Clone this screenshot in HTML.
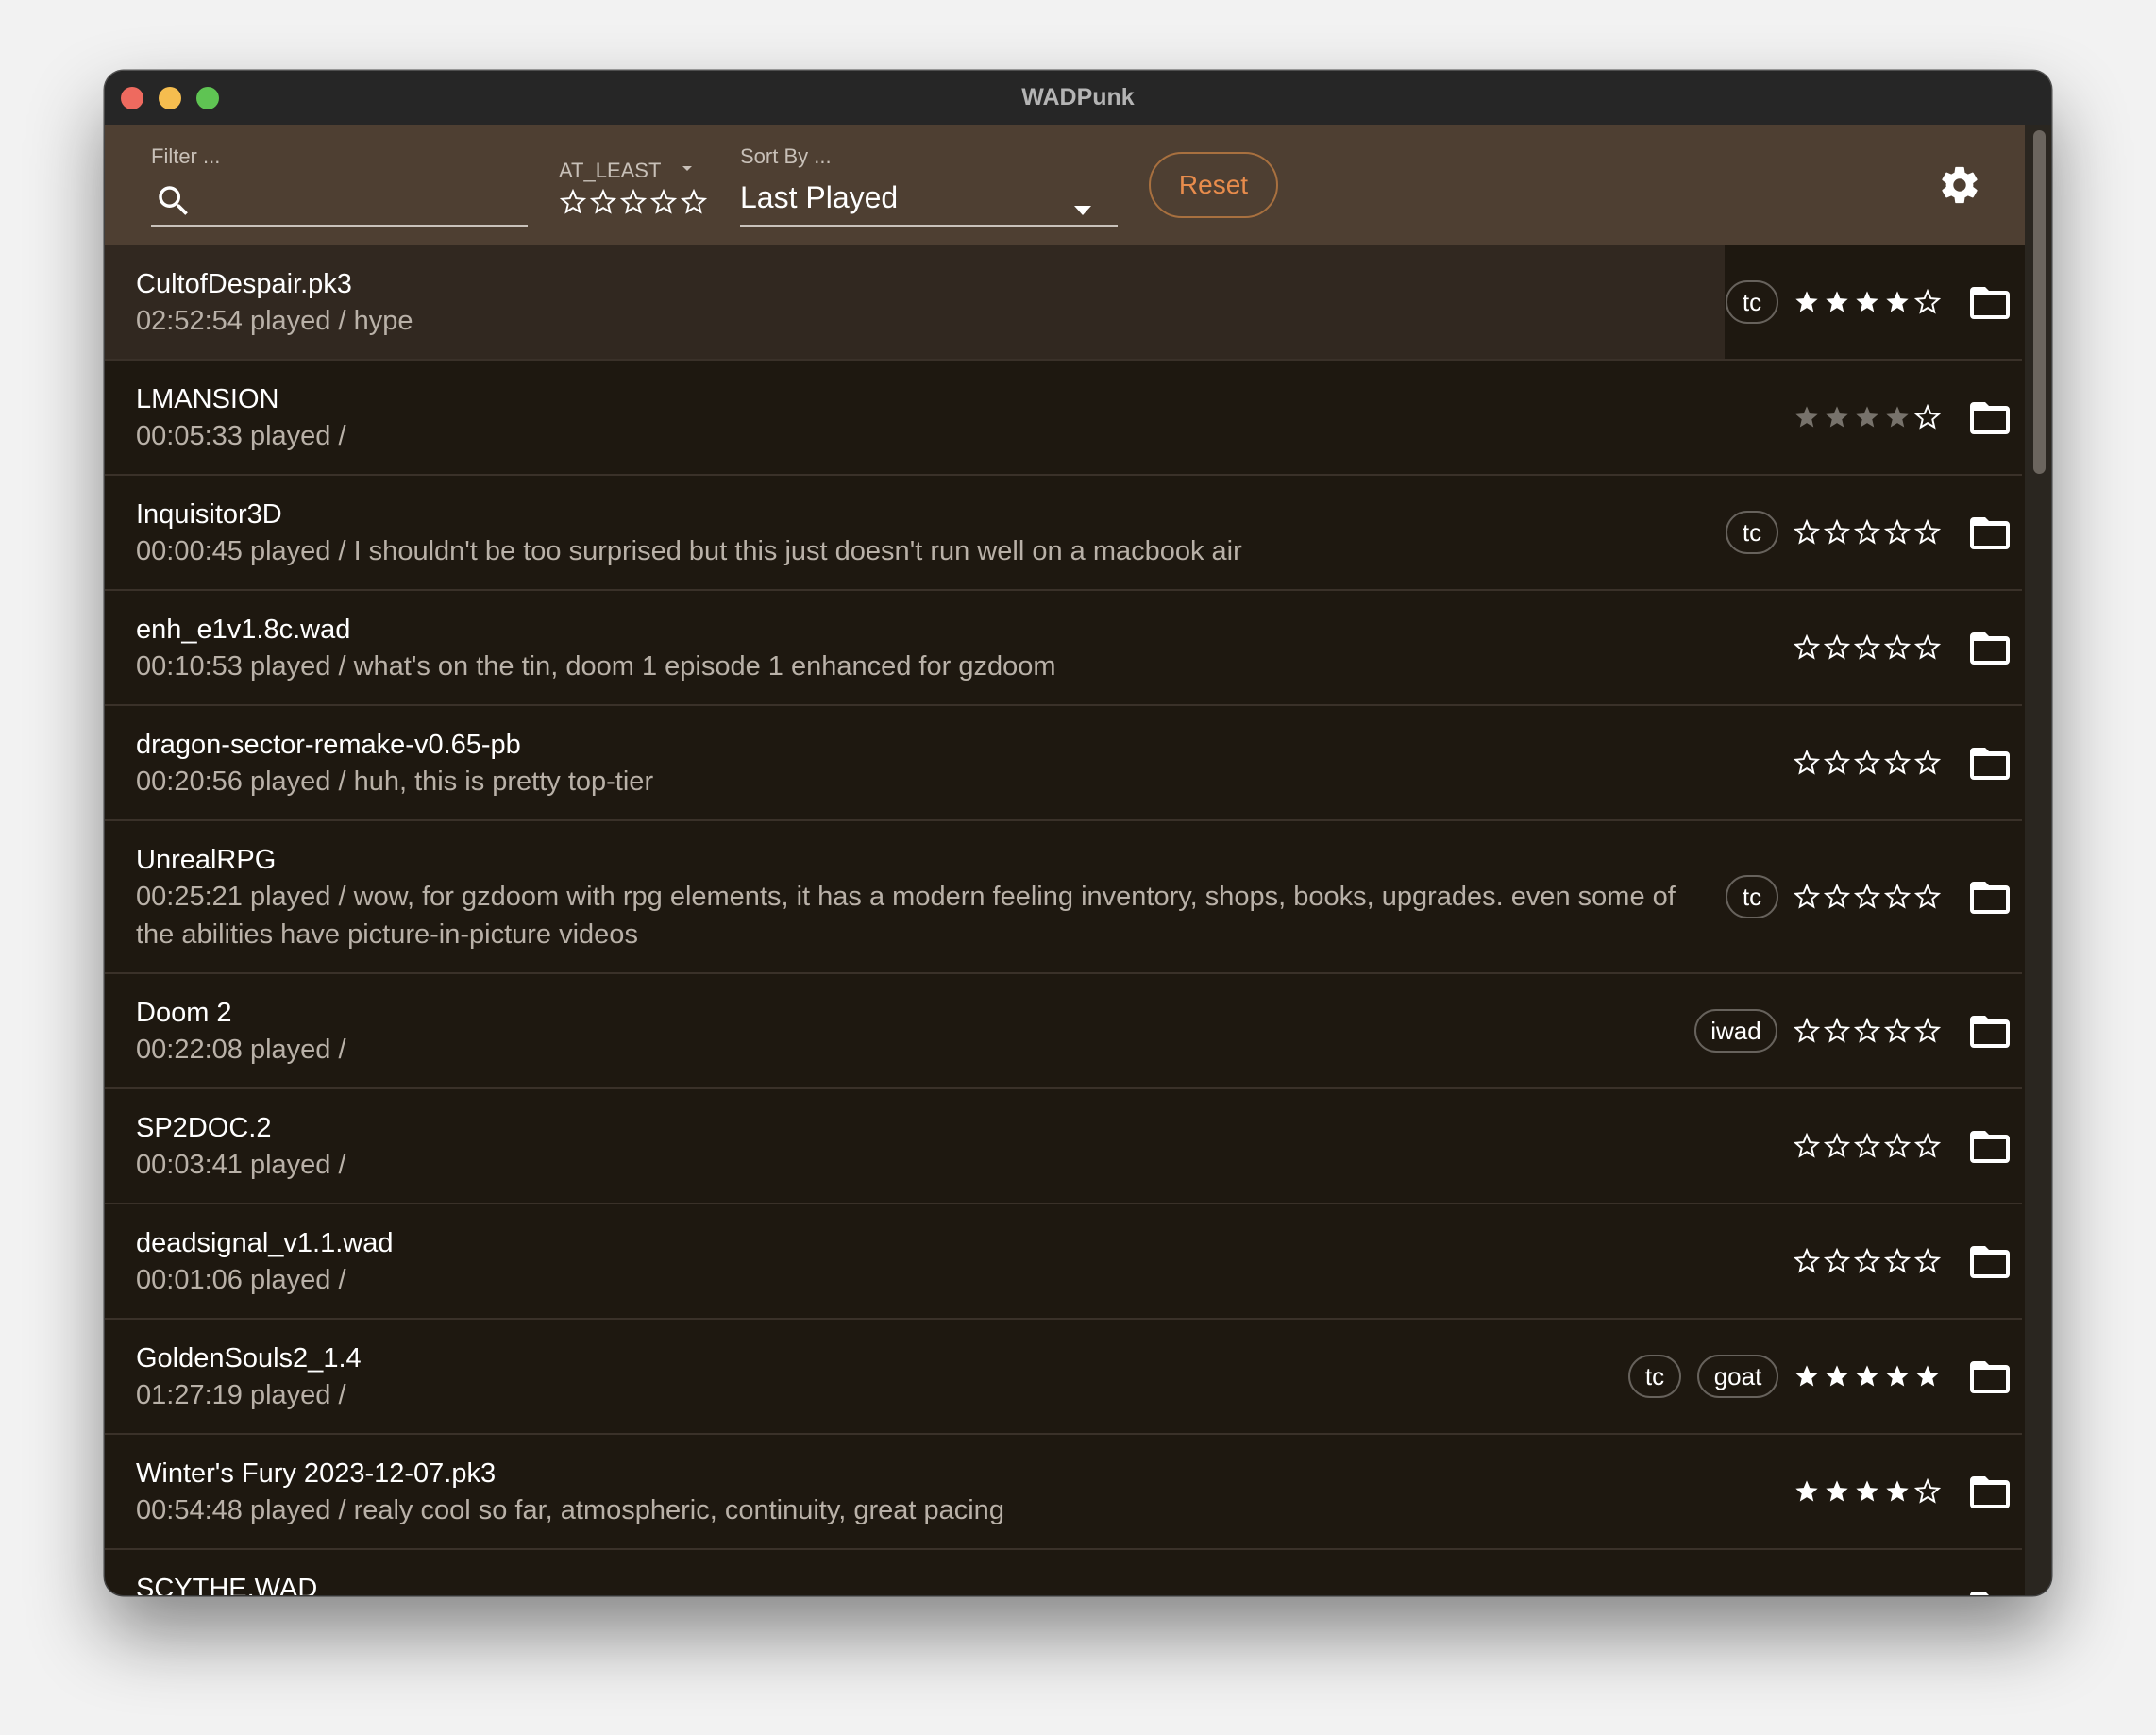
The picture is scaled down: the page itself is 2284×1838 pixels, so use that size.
<!DOCTYPE html>
<html><head><meta charset="utf-8"><style>
*{margin:0;padding:0;box-sizing:border-box}
html,body{width:2284px;height:1838px;overflow:hidden;background:#f2f2f2;font-family:"Liberation Sans",sans-serif}
.win{position:absolute;left:111px;top:75px;width:2062px;height:1615px;border-radius:20px;overflow:hidden;background:#1e1810;box-shadow:0 40px 80px rgba(0,0,0,.45),0 0 0 1.5px #555;}
.tb{position:absolute;left:0;top:0;width:100%;height:57px;background:#262626}
.dot{position:absolute;top:17px;width:24px;height:24px;border-radius:50%}
.title{position:absolute;left:0;width:100%;top:14px;text-align:center;color:#b4b4b4;font-weight:bold;font-size:25px}
.tool{position:absolute;left:0;top:57px;width:2034px;height:128px;background:#4e3f32}
.lbl{position:absolute;color:#c8c0b8;font-size:22px}
.uline{position:absolute;height:3px;background:#c9c2bb}
.list{position:absolute;left:0;top:185px;width:2031px;height:1430px;overflow:hidden}
.row{position:absolute;left:0;width:2031px;border-bottom:2px solid #3a3129}
.t1{position:absolute;left:33px;color:#fff;font-size:29px;line-height:32px;white-space:nowrap}
.t2{position:absolute;left:33px;color:#b9b1a8;font-size:29px;line-height:40px;width:1640px}
.chip{position:absolute;height:46px;border:2px solid #67625c;border-radius:23px;color:#fff;font-size:26px;line-height:42px;text-align:center}
.stars{position:absolute;left:1789px;width:160px;height:28px}
.fold{position:absolute;left:1976px;width:42px;height:34px}
.sb{position:absolute;left:2034px;top:57px;width:28px;height:1558px;background:#2a2620}
.thumb{position:absolute;left:9px;top:6px;width:13px;height:364px;border-radius:7px;background:#6b655e}
</style></head><body>
<svg width="0" height="0" style="position:absolute">
<defs>
<symbol id="sf" viewBox="0 0 24 24"><path fill="#fff" d="M12 17.27L18.18 21l-1.64-7.03L22 9.24l-7.19-.61L12 2 9.19 8.63 2 9.24l5.46 4.73L5.82 21z"/></symbol>
<symbol id="sg" viewBox="0 0 24 24"><path fill="#77726b" d="M12 17.27L18.18 21l-1.64-7.03L22 9.24l-7.19-.61L12 2 9.19 8.63 2 9.24l5.46 4.73L5.82 21z"/></symbol>
<symbol id="so" viewBox="0 0 24 24"><path fill="none" stroke="#fff" stroke-width="1.7" stroke-linejoin="miter" d="M12 17.27L18.18 21l-1.64-7.03L22 9.24l-7.19-.61L12 2 9.19 8.63 2 9.24l5.46 4.73L5.82 21z"/></symbol>
<symbol id="fd" viewBox="0 0 42 34"><path fill="#fff" d="M4 0h12l4 4h18a4 4 0 0 1 4 4v22a4 4 0 0 1-4 4H4a4 4 0 0 1-4-4V4a4 4 0 0 1 4-4zM4 9v21h34V9z"/></symbol>
</defs></svg>
<div class="win">
 <div class="tb">
  <div class="dot" style="left:17px;background:#ee6a5f"></div>
  <div class="dot" style="left:57px;background:#f5bd4f"></div>
  <div class="dot" style="left:97px;background:#5fc453"></div>
  <div class="title">WADPunk</div>
 </div>
 <div class="tool">
  <div class="lbl" style="left:49px;top:21px">Filter ...</div>
  <svg style="position:absolute;left:52px;top:60px" width="42" height="42" viewBox="0 0 24 24"><path fill="#fff" d="M15.5 14h-.79l-.28-.27A6.47 6.47 0 0 0 16 9.5 6.5 6.5 0 1 0 9.5 16c1.61 0 3.09-.59 4.23-1.57l.27.28v.79l5 4.99L20.49 19l-4.99-5zm-6 0C7.010 14 5 11.99 5 9.5S7.01 5 9.5 5 14 7.01 14 9.5 11.99 14 9.5 14z"/></svg>
  <div class="uline" style="left:49px;top:106px;width:399px"></div>
  <div class="lbl" style="left:481px;top:36px">AT_LEAST</div>
  <div style="position:absolute;left:612px;top:44px;width:0;height:0;border-left:5px solid transparent;border-right:5px solid transparent;border-top:5px solid #c8c0b8"></div>
  <svg style="position:absolute;left:482px;top:68px" width="160" height="30"><use href="#so" x="0" y="0" width="28" height="28"/><use href="#so" x="32" y="0" width="28" height="28"/><use href="#so" x="64" y="0" width="28" height="28"/><use href="#so" x="96" y="0" width="28" height="28"/><use href="#so" x="128" y="0" width="28" height="28"/></svg>
  <div class="lbl" style="left:673px;top:21px">Sort By ...</div>
  <div style="position:absolute;left:673px;top:59px;color:#fff;font-size:32px">Last Played</div>
  <div style="position:absolute;left:1027px;top:86px;width:0;height:0;border-left:9px solid transparent;border-right:9px solid transparent;border-top:10px solid #fff"></div>
  <div class="uline" style="left:673px;top:106px;width:400px"></div>
  <div style="position:absolute;left:1106px;top:29px;width:137px;height:70px;border:2px solid #a8703f;border-radius:35px;color:#e88c4c;font-size:28px;line-height:66px;text-align:center">Reset</div>
  <svg style="position:absolute;left:1942px;top:41px" width="46" height="46" viewBox="0 0 24 24"><path fill="#fff" d="M19.43 12.98c.04-.32.07-.64.07-.98s-.03-.66-.07-.98l2.11-1.650c.19-.15.24-.42.12-.64l-2-3.46c-.12-.22-.39-.3-.61-.22l-2.49 1c-.52-.4-1.08-.73-1.69-.98l-.38-2.65A.49.49 0 0 0 14 2h-4c-.25 0-.46.18-.49.42l-.38 2.65c-.61.25-1.17.59-1.69.98l-2.49-1c-.23-.09-.49 0-.61.22l-2 3.46c-.13.22-.07.49.12.64l2.11 1.65c-.04.32-.07.65-.07.98s.03.66.07.98l-2.11 1.65c-.19.15-.24.42-.12.64l2 3.46c.12.22.39.3.61.22l2.49-1c.52.4 1.08.73 1.69.98l.38 2.65c.03.24.24.42.49.42h4c.25 0 .46-.18.49-.42l.38-2.65c.61-.25 1.17-.59 1.69-.98l2.49 1c.23.09.49 0 .61-.22l2-3.46c.12-.22.07-.49-.12-.64l-2.11-1.65zM12 15.5c-1.93 0-3.5-1.57-3.5-3.5s1.57-3.5 3.5-3.5 3.5 1.57 3.5 3.5-1.57 3.5-3.5 3.5z"/></svg>
 </div>
 <div class="list">
  <div class="row" style="top:0;height:122px">
   <div style="position:absolute;left:0;top:0;width:1716px;height:120px;background:#312820"></div>
   <div class="t1" style="top:25px">CultofDespair.pk3</div>
   <div class="t2" style="top:60px">02:52:54 played / hype</div>
   <div class="chip" style="left:1717px;top:37px;width:56px">tc</div>
   <svg class="stars" style="top:46px"><use href="#sf" x="0" width="28" height="28"/><use href="#sf" x="32" width="28" height="28"/><use href="#sf" x="64" width="28" height="28"/><use href="#sf" x="96" width="28" height="28"/><use href="#so" x="128" width="28" height="28"/></svg>
   <svg class="fold" style="top:44px"><use href="#fd" width="42" height="34"/></svg>
  </div>
  <div class="row" style="top:122px;height:122px">
   <div class="t1" style="top:25px">LMANSION</div>
   <div class="t2" style="top:60px">00:05:33 played /</div>
   <svg class="stars" style="top:46px"><use href="#sg" x="0" width="28" height="28"/><use href="#sg" x="32" width="28" height="28"/><use href="#sg" x="64" width="28" height="28"/><use href="#sg" x="96" width="28" height="28"/><use href="#so" x="128" width="28" height="28"/></svg>
   <svg class="fold" style="top:44px"><use href="#fd" width="42" height="34"/></svg>
  </div>
  <div class="row" style="top:244px;height:122px">
   <div class="t1" style="top:25px">Inquisitor3D</div>
   <div class="t2" style="top:60px">00:00:45 played / I shouldn't be too surprised but this just doesn't run well on a macbook air</div>
   <div class="chip" style="left:1717px;top:37px;width:56px">tc</div>
   <svg class="stars" style="top:46px"><use href="#so" x="0" width="28" height="28"/><use href="#so" x="32" width="28" height="28"/><use href="#so" x="64" width="28" height="28"/><use href="#so" x="96" width="28" height="28"/><use href="#so" x="128" width="28" height="28"/></svg>
   <svg class="fold" style="top:44px"><use href="#fd" width="42" height="34"/></svg>
  </div>
  <div class="row" style="top:366px;height:122px">
   <div class="t1" style="top:25px">enh_e1v1.8c.wad</div>
   <div class="t2" style="top:60px">00:10:53 played / what's on the tin, doom 1 episode 1 enhanced for gzdoom</div>
   <svg class="stars" style="top:46px"><use href="#so" x="0" width="28" height="28"/><use href="#so" x="32" width="28" height="28"/><use href="#so" x="64" width="28" height="28"/><use href="#so" x="96" width="28" height="28"/><use href="#so" x="128" width="28" height="28"/></svg>
   <svg class="fold" style="top:44px"><use href="#fd" width="42" height="34"/></svg>
  </div>
  <div class="row" style="top:488px;height:122px">
   <div class="t1" style="top:25px">dragon-sector-remake-v0.65-pb</div>
   <div class="t2" style="top:60px">00:20:56 played / huh, this is pretty top-tier</div>
   <svg class="stars" style="top:46px"><use href="#so" x="0" width="28" height="28"/><use href="#so" x="32" width="28" height="28"/><use href="#so" x="64" width="28" height="28"/><use href="#so" x="96" width="28" height="28"/><use href="#so" x="128" width="28" height="28"/></svg>
   <svg class="fold" style="top:44px"><use href="#fd" width="42" height="34"/></svg>
  </div>
  <div class="row" style="top:610px;height:162px">
   <div class="t1" style="top:25px">UnrealRPG</div>
   <div class="t2" style="top:60px">00:25:21 played / wow, for gzdoom with rpg elements, it has a modern feeling inventory, shops, books, upgrades. even some of the abilities have picture-in-picture videos</div>
   <div class="chip" style="left:1717px;top:57px;width:56px">tc</div>
   <svg class="stars" style="top:66px"><use href="#so" x="0" width="28" height="28"/><use href="#so" x="32" width="28" height="28"/><use href="#so" x="64" width="28" height="28"/><use href="#so" x="96" width="28" height="28"/><use href="#so" x="128" width="28" height="28"/></svg>
   <svg class="fold" style="top:64px"><use href="#fd" width="42" height="34"/></svg>
  </div>
  <div class="row" style="top:772px;height:122px">
   <div class="t1" style="top:25px">Doom 2</div>
   <div class="t2" style="top:60px">00:22:08 played /</div>
   <div class="chip" style="left:1684px;top:37px;width:88px">iwad</div>
   <svg class="stars" style="top:46px"><use href="#so" x="0" width="28" height="28"/><use href="#so" x="32" width="28" height="28"/><use href="#so" x="64" width="28" height="28"/><use href="#so" x="96" width="28" height="28"/><use href="#so" x="128" width="28" height="28"/></svg>
   <svg class="fold" style="top:44px"><use href="#fd" width="42" height="34"/></svg>
  </div>
  <div class="row" style="top:894px;height:122px">
   <div class="t1" style="top:25px">SP2DOC.2</div>
   <div class="t2" style="top:60px">00:03:41 played /</div>
   <svg class="stars" style="top:46px"><use href="#so" x="0" width="28" height="28"/><use href="#so" x="32" width="28" height="28"/><use href="#so" x="64" width="28" height="28"/><use href="#so" x="96" width="28" height="28"/><use href="#so" x="128" width="28" height="28"/></svg>
   <svg class="fold" style="top:44px"><use href="#fd" width="42" height="34"/></svg>
  </div>
  <div class="row" style="top:1016px;height:122px">
   <div class="t1" style="top:25px">deadsignal_v1.1.wad</div>
   <div class="t2" style="top:60px">00:01:06 played /</div>
   <svg class="stars" style="top:46px"><use href="#so" x="0" width="28" height="28"/><use href="#so" x="32" width="28" height="28"/><use href="#so" x="64" width="28" height="28"/><use href="#so" x="96" width="28" height="28"/><use href="#so" x="128" width="28" height="28"/></svg>
   <svg class="fold" style="top:44px"><use href="#fd" width="42" height="34"/></svg>
  </div>
  <div class="row" style="top:1138px;height:122px">
   <div class="t1" style="top:25px">GoldenSouls2_1.4</div>
   <div class="t2" style="top:60px">01:27:19 played /</div>
   <div class="chip" style="left:1614px;top:37px;width:56px">tc</div>
   <div class="chip" style="left:1687px;top:37px;width:86px">goat</div>
   <svg class="stars" style="top:46px"><use href="#sf" x="0" width="28" height="28"/><use href="#sf" x="32" width="28" height="28"/><use href="#sf" x="64" width="28" height="28"/><use href="#sf" x="96" width="28" height="28"/><use href="#sf" x="128" width="28" height="28"/></svg>
   <svg class="fold" style="top:44px"><use href="#fd" width="42" height="34"/></svg>
  </div>
  <div class="row" style="top:1260px;height:122px">
   <div class="t1" style="top:25px">Winter's Fury 2023-12-07.pk3</div>
   <div class="t2" style="top:60px">00:54:48 played / realy cool so far, atmospheric, continuity, great pacing</div>
   <svg class="stars" style="top:46px"><use href="#sf" x="0" width="28" height="28"/><use href="#sf" x="32" width="28" height="28"/><use href="#sf" x="64" width="28" height="28"/><use href="#sf" x="96" width="28" height="28"/><use href="#so" x="128" width="28" height="28"/></svg>
   <svg class="fold" style="top:44px"><use href="#fd" width="42" height="34"/></svg>
  </div>
  <div class="row" style="top:1382px;height:122px;border:none">
   <div class="t1" style="top:25px">SCYTHE.WAD</div>
   <svg class="fold" style="top:44px"><use href="#fd" width="42" height="34"/></svg>
  </div>
 </div>
 <div class="sb"><div class="thumb"></div></div>
</div>
</body></html>
